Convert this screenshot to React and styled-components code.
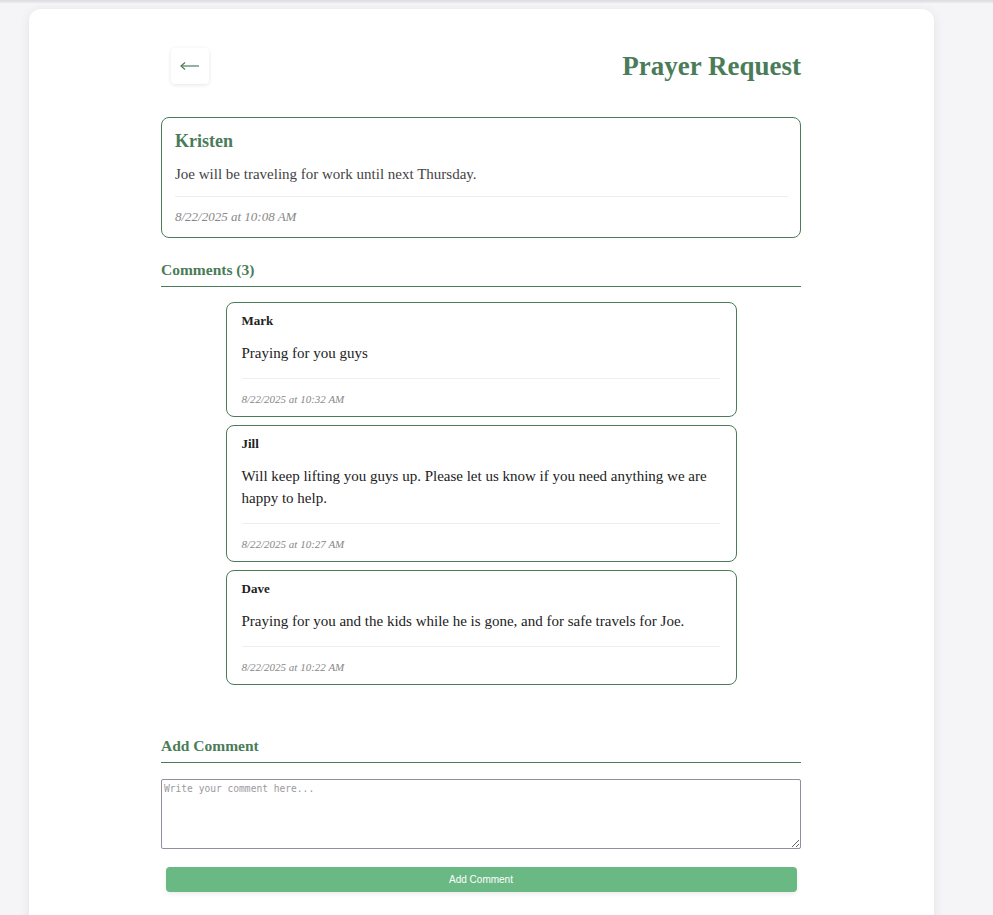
import styled, { createGlobalStyle } from "styled-components";

const GlobalStyle = createGlobalStyle`
  body {
    margin: 0;
    background: #f5f5f7;
    font-family: "Liberation Serif", "DejaVu Serif", serif;
  }
`;

const comments = [
  {
    name: "Mark",
    text: "Praying for you guys",
    date: "8/22/2025 at 10:32 AM",
  },
  {
    name: "Jill",
    text: "Will keep lifting you guys up. Please let us know if you need anything we are happy to help.",
    date: "8/22/2025 at 10:27 AM",
  },
  {
    name: "Dave",
    text: "Praying for you and the kids while he is gone, and for safe travels for Joe.",
    date: "8/22/2025 at 10:22 AM",
  },
];

function BackArrow() {
  return (
    <svg width="20" height="10" viewBox="0 0 20 10" fill="none">
      <path d="M1 5H19" stroke="#4a7c59" strokeWidth="1.2" />
      <path d="M5 1.5L1 5L5 8.5" stroke="#4a7c59" strokeWidth="1.2" />
    </svg>
  );
}

function App() {
  return (
    <>
      <GlobalStyle />
      <TopBar />
      <PageWrap>
        <CardSt>
          <ContentSt>
            <HeaderSt>
              <BackBtn aria-label="Back">
                <BackArrow />
              </BackBtn>
              <TitleSt>Prayer Request</TitleSt>
            </HeaderSt>

            <RequestCard>
              <RequestName>Kristen</RequestName>
              <RequestText>Joe will be traveling for work until next Thursday.</RequestText>
              <RequestDate>8/22/2025 at 10:08 AM</RequestDate>
            </RequestCard>

            <SectionTitle>Comments (3)</SectionTitle>
            <CommentList>
              {comments.map((c) => (
                <CommentCard key={c.name}>
                  <CommentName>{c.name}</CommentName>
                  <CommentText>{c.text}</CommentText>
                  <CommentDate>{c.date}</CommentDate>
                </CommentCard>
              ))}
            </CommentList>

            <SectionTitle $spaced>Add Comment</SectionTitle>
            <TextArea placeholder="Write your comment here..." />
            <SubmitBtn>Add Comment</SubmitBtn>
          </ContentSt>
        </CardSt>
      </PageWrap>
    </>
  );
}

export default App;

const TopBar = styled.div`
  height: 3px;
  background: linear-gradient(#dcdce0, #ececef);
`;

const PageWrap = styled.div`
  padding: 6px 59px 0 29px;
`;

const CardSt = styled.div`
  background: #fff;
  border-radius: 12px;
  box-shadow: 0 2px 12px rgba(0, 0, 0, 0.08);
  padding: 39px 0 40px 132px;
  min-height: 870px;
  box-sizing: border-box;
`;

const ContentSt = styled.div`
  width: 640px;
`;

const HeaderSt = styled.div`
  display: flex;
  justify-content: space-between;
  align-items: center;
  margin-bottom: 33px;
`;

const BackBtn = styled.button`
  display: flex;
  align-items: center;
  justify-content: center;
  width: 38px;
  height: 36px;
  margin-left: 10px;
  border: none;
  background: #fff;
  border-radius: 4px;
  box-shadow: 0 1px 4px rgba(0, 0, 0, 0.1);
  cursor: pointer;
  padding: 0;
`;

const TitleSt = styled.h1`
  margin: 0;
  font-size: 27px;
  font-weight: bold;
  color: #4a7c59;
`;

const RequestCard = styled.div`
  border: 1px solid #4a7c59;
  border-radius: 8px;
  padding: 12px 12px 11px 13px;
`;

const RequestName = styled.div`
  font-size: 18px;
  font-weight: bold;
  color: #4a7c59;
  line-height: 22px;
`;

const RequestText = styled.div`
  margin-top: 12px;
  font-size: 15px;
  color: #444;
  line-height: 20px;
  padding-bottom: 12px;
  border-bottom: 1px solid #eee;
`;

const RequestDate = styled.div`
  margin-top: 11px;
  font-size: 13px;
  font-style: italic;
  color: #888;
  line-height: 18px;
`;

const SectionTitle = styled.h3`
  margin: ${(p) => (p.$spaced ? "52px 0 16px" : "23px 0 15px")};
  padding-bottom: 7px;
  border-bottom: 1px solid #4a7c59;
  font-size: 15.5px;
  font-weight: bold;
  color: #4a7c59;
  line-height: 18px;
`;

const CommentList = styled.div`
  display: flex;
  flex-direction: column;
  align-items: center;
  gap: 8px;
`;

const CommentCard = styled.div`
  width: 511px;
  box-sizing: border-box;
  border: 1px solid #4a7c59;
  border-radius: 8px;
  padding: 10px 16px 10px 15px;
`;

const CommentName = styled.div`
  font-size: 13px;
  font-weight: bold;
  color: #222;
  line-height: 16px;
`;

const CommentText = styled.div`
  margin-top: 13px;
  font-size: 15px;
  color: #222;
  line-height: 22px;
  padding-bottom: 14px;
  border-bottom: 1px solid #eee;
`;

const CommentDate = styled.div`
  margin-top: 13px;
  font-size: 11px;
  font-style: italic;
  color: #888;
  line-height: 14px;
`;

const TextArea = styled.textarea`
  display: block;
  width: 100%;
  height: 70px;
  box-sizing: border-box;
  border: 1px solid #8f8f9d;
  border-radius: 2px;
  padding: 3px 2px;
  font-family: "DejaVu Sans Mono", monospace;
  font-size: 9.6px;
  resize: vertical;
  &::placeholder {
    color: #9a9aa0;
  }
`;

const SubmitBtn = styled.button`
  display: block;
  width: 631px;
  height: 25px;
  margin: 18px auto 0;
  border: none;
  border-radius: 4px;
  background: #6ab883;
  color: #fff;
  font-family: "Liberation Sans", Arial, sans-serif;
  font-size: 10px;
  box-shadow: 0 2px 4px rgba(0, 0, 0, 0.08);
  cursor: pointer;
`;
